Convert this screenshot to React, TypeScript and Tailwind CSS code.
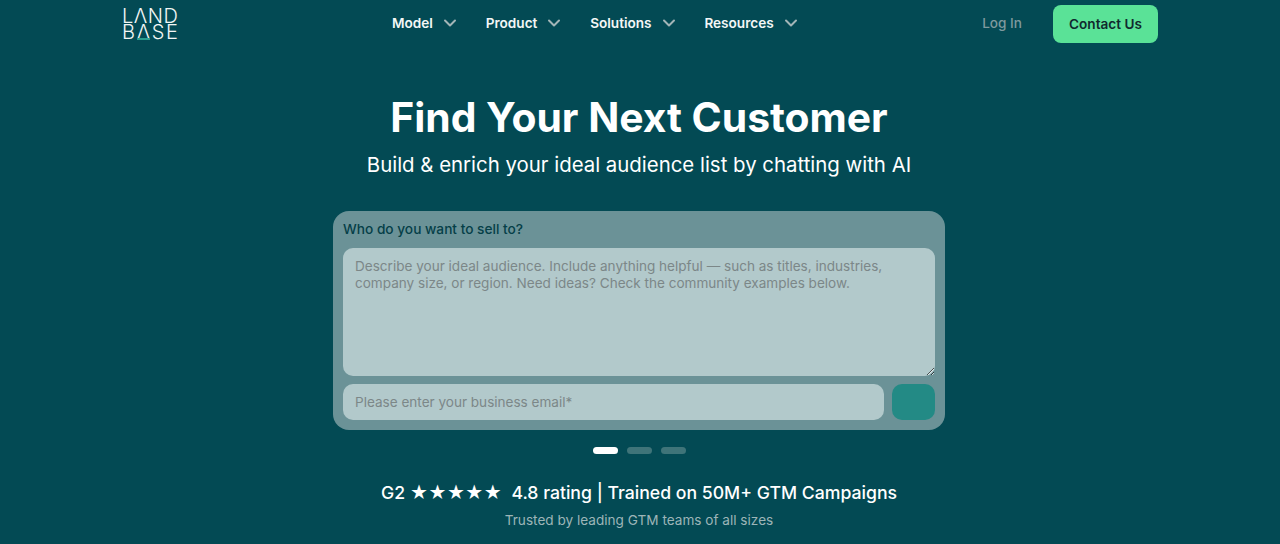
import React from "react";
import { ChevronDown } from "lucide-react";

const navItems = ["Model", "Product", "Solutions", "Resources"];

function Logo() {
  return (
    <div className="flex w-[56px] flex-col gap-[2px] font-['Inter',sans-serif] font-light text-[#f2f6f5]">
      <div className="flex h-[14px] justify-between text-[20px] leading-[14px]">
        <span>L</span><span>Λ</span><span>N</span><span>D</span>
      </div>
      <div className="flex h-[14px] justify-between text-[20px] leading-[14px]">
        <span>B</span>
        <span className="relative">Λ<span className="absolute bottom-[-1px] left-0 right-0 h-[2px] bg-[#2a9d8f]" /></span>
        <span>S</span><span>E</span>
      </div>
    </div>
  );
}

export default function App() {
  return (
    <div className="h-[544px] w-[1280px] overflow-hidden bg-[#034a54] font-['Inter',sans-serif] text-white">
      <header className="flex h-[48px] items-center pl-[122px] pr-[122px]">
        <Logo />
        <nav className="mb-[1px] ml-[214px] flex items-center gap-[25.8px]">
          {navItems.map((n) => (
            <div key={n} className="flex items-center gap-[7px] text-[13.6px] font-semibold text-[#f4f7f7]">
              <span>{n}</span>
              <ChevronDown size={20} strokeWidth={2.4} className="text-[#a3b5b7]" />
            </div>
          ))}
        </nav>
        <div className="ml-auto flex items-center gap-[31px]">
          <span className="mb-[1px] text-[13.6px] font-medium text-[#7f9a9e]">Log In</span>
          <button className="h-[38px] w-[105px] rounded-[8px] bg-[#5ae297] text-[13.6px] font-semibold text-[#10292e]">Contact Us</button>
        </div>
      </header>

      <main className="flex w-[1278px] flex-col items-center">
        <h1 className="mt-[44px] text-[40.8px] font-bold leading-[50px]">Find Your Next Customer</h1>
        <p className="mt-[9px] text-[20.4px] leading-[28px]">Build &amp; enrich your ideal audience list by chatting with AI</p>

        <div className="mt-[32px] flex h-[219px] w-[612px] flex-col rounded-[16px] bg-[#6b9297] px-[10px] pt-[8px]">
          <div className="text-[13.7px] font-medium leading-[20px] text-[#053f48]">Who do you want to sell to?</div>
          <textarea
            className="mt-[9px] h-[128px] w-full rounded-[10px] bg-[#b2c9cb] px-[12px] py-[10px] text-[13.55px] leading-[17px] outline-none placeholder:text-[#7c8788]"
            placeholder="Describe your ideal audience. Include anything helpful — such as titles, industries, company size, or region. Need ideas? Check the community examples below."
          />
          <div className="mt-[8px] flex gap-[8px]">
            <input
              className="h-[36px] flex-1 rounded-[10px] bg-[#b2c9cb] px-[12px] text-[13.55px] outline-none placeholder:text-[#7c8788]"
              placeholder="Please enter your business email*"
            />
            <div className="h-[36px] w-[43px] rounded-[10px] bg-[#238a85]" />
          </div>
        </div>

        <div className="mt-[17px] flex gap-[9px]">
          <span className="h-[7px] w-[25px] rounded-full bg-white" />
          <span className="h-[7px] w-[25px] rounded-full bg-[#3f7479]" />
          <span className="h-[7px] w-[25px] rounded-full bg-[#3f7479]" />
        </div>

        <p className="mt-[25px] text-[17.66px] font-medium leading-[28px]">G2 ★★★★★&nbsp; 4.8 rating | Trained on 50M+ GTM Campaigns</p>
        <p className="mt-[3px] text-[13.6px] leading-[20px] text-[#9db5b8]">Trusted by leading GTM teams of all sizes</p>
      </main>
    </div>
  );
}
